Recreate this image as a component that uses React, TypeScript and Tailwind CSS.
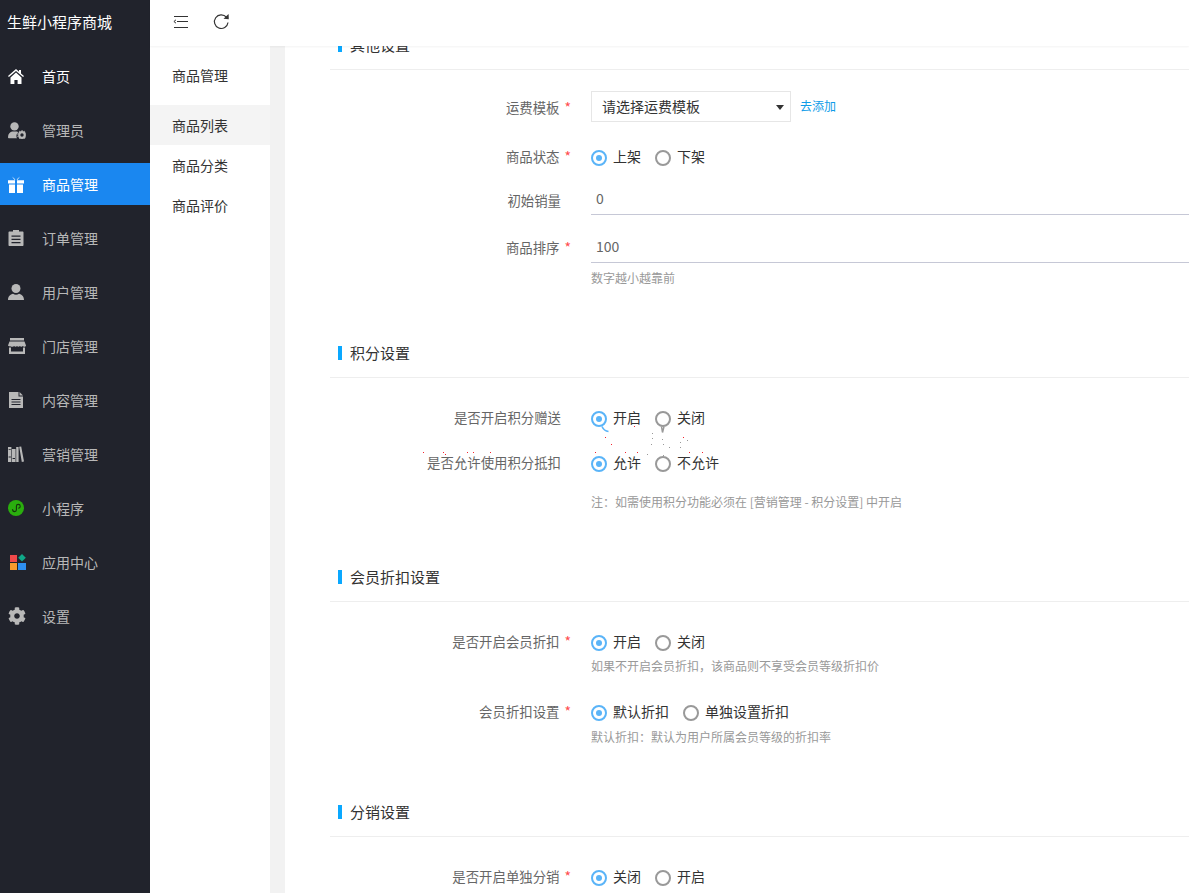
import React from 'react';
import { FaCog } from 'react-icons/fa';

type IconProps = { className?: string };

function HomeIcon({ className }: IconProps) {
  return (
    <svg viewBox="0 0 16 15" className={className} fill="currentColor">
      <path d="M8 0L0 7l.9 1L8 1.900 15.100 8l.9-1-3-2.600V1h-2v1.700z" />
      <path d="M2.500 8.400L8 3.600l5.500 4.800V15H9.600v-4H6.400v4H2.500z" />
    </svg>
  );
}

function UserCogIcon({ className }: IconProps) {
  return (
    <svg viewBox="0 0 18 17" className={className} fill="currentColor">
      <circle cx="6.500" cy="4.400" r="4.200" />
      <path d="M0 15.200c0-3.400 2.200-5.200 4.200-5.600h4.400c.7.1 1.200.3 1.700.6-1.300 1-1.900 2.300-1.900 3.700 0 .8.2 1.600.6 2.300H1.200C.5 16.200 0 15.900 0 15.200z" />
      <circle cx="14" cy="13" r="2.800" fill="none" stroke="currentColor" strokeWidth="2.200" />
      <circle cx="14" cy="13" r="4.400" fill="none" stroke="currentColor" strokeWidth="1" strokeDasharray="1.400 1.400" />
    </svg>
  );
}

function GiftIcon({ className }: IconProps) {
  return (
    <svg viewBox="0 0 16 17" className={className} fill="currentColor">
      <path d="M0 4.200h7v3.200H0zM9 4.200h7v3.200H9zM1 8.600h6V17H1zM9 8.600h6V17H9z" />
      <path d="M4 .4l3.400 3-1 .4zM12 .4L8.600 3.400l1 .4z" />
    </svg>
  );
}

function ClipboardIcon({ className }: IconProps) {
  return (
    <svg viewBox="0 0 16 16" className={className} fill="currentColor">
      <path fillRule="evenodd" d="M1.500 1.500H5V0h6v1.500h3.500c.6 0 1 .4 1 1v12.500c0 .6-.4 1-1 1h-13c-.6 0-1-.4-1-1V2.500c0-.6.4-1 1-1zM3.500 5.500v1.300h9V5.500zm0 3.300v1.300h9V8.800zm0 3.200v1.300h9V12z" />
    </svg>
  );
}

function UserIcon({ className }: IconProps) {
  return (
    <svg viewBox="0 0 16 16" className={className} fill="currentColor">
      <circle cx="8" cy="4.500" r="4.500" />
      <path d="M0 16c0-3.600 2.400-5.800 5-6.200.9.600 1.900.9 3 .9s2.100-.3 3-.9c2.600.4 5 2.600 5 6.200z" />
    </svg>
  );
}

function StoreIcon({ className }: IconProps) {
  return (
    <svg viewBox="0 0 18 16" className={className} fill="currentColor">
      <path d="M2 0h14v2.500H2zM1.500 3.500h15L18 7.500c0 .8-1 1.300-1.800 1.300-.6 0-1.100-.3-1.400-.7-.3.4-.9.7-1.500.7s-1.100-.3-1.400-.7c-.3.4-.9.7-1.500.7s-1.100-.3-1.400-.7c-.3.4-.9.7-1.500.7s-1.100-.3-1.400-.7c-.3.4-.9.7-1.500.7S0 8.300 0 7.500z" />
      <path d="M1 9.500h2V13.500h12V9.500h2V16H1z" />
    </svg>
  );
}

function FileIcon({ className }: IconProps) {
  return (
    <svg viewBox="0 0 14 16" className={className} fill="currentColor">
      <path fillRule="evenodd" d="M0 0h9.500v4.500H14V16H0zM2.500 7v1h9V7zm0 2.500v1h9v-1zm0 2.500v1h9v-1z" />
      <path d="M10.500 0L14 3.500h-3.500z" />
    </svg>
  );
}

function BooksIcon({ className }: IconProps) {
  return (
    <svg viewBox="0 0 16 16" className={className} fill="currentColor">
      <path d="M0 1h3.400v15H0zM4 3h3.600v13H4zM8.200 1h2.400v15H8.200zM11.200 .8l2-.4L16 15.600l-2.200.4z" />
      <path d="M.6 10.500h2.200v1H.6zM4.600 12h2.400v1H4.600zM.6 3h2.200v.8H.6z" fill="#22252e" />
    </svg>
  );
}

function MiniProgramIcon({ className }: IconProps) {
  return (
    <svg viewBox="0 0 16 16" className={className}>
      <circle cx="8" cy="8" r="8" fill="#2aae0e" />
      <path d="M4.600 9.600c0 1.200.9 2 1.900 2s1.900-.9 1.900-1.900V6.300c0-1 .9-1.900 1.900-1.900s1.900.8 1.900 1.900c0 1-.7 1.700-1.500 1.800" fill="none" stroke="#14330c" strokeWidth="1.100" strokeLinecap="round" />
    </svg>
  );
}

function AppsIcon({ className }: IconProps) {
  return (
    <svg viewBox="0 0 16 16" className={className}>
      <rect x="0" y="1" width="7" height="7" fill="#f0494a" />
      <rect x="0" y="9" width="7" height="7" fill="#f99a2e" />
      <rect x="8" y="9" width="8" height="7" fill="#2e8ff0" />
      <path d="M12 0l3.800 3.800L12 7.600 8.200 3.800z" fill="#0fa888" />
    </svg>
  );
}

function FoldIcon() {
  return (
    <svg viewBox="0 0 15 12" className="h-[12px] w-[15px]" fill="none" stroke="#333" strokeWidth="1">
      <path d="M1 .5h14M4 5.500h11M1 11.500h14" />
      <path d="M3 3.800L.9 5.500 3 7.200" />
    </svg>
  );
}

function RefreshIcon() {
  return (
    <svg viewBox="0 0 17 16" className="h-4 w-[17px]" fill="none">
      <path d="M13.400 3.200A6.800 6.800 0 1 0 15 8.500" stroke="#333" strokeWidth="1.200" />
      <path d="M10.500 4.800L15.800 5.200 15.600 0z" fill="#333" />
    </svg>
  );
}

// compression specks and radio smears that sit on the 积分设置 rows
const redSpecks = [[423, 452], [443, 452], [445, 454], [467, 452], [473, 452], [490, 452], [634, 426], [605, 437], [611, 444], [683, 437], [595, 452], [625, 452], [637, 452], [689, 452], [702, 452]];
const graySpecks = [[652, 433], [652, 438], [662, 439], [651, 444], [663, 444], [669, 447], [680, 447], [687, 440], [680, 442], [647, 454], [663, 455]];

function Specks() {
  return (
    <svg viewBox="0 0 1189 893" className="pointer-events-none absolute inset-0 h-[893px] w-[1189px]">
      <path d="M602 426.500Q604 431 608.500 431.500" fill="none" stroke="#5ab4f8" strokeWidth="1.600" />
      <path d="M661.500 426.500L662.500 432.500L664 426.500" fill="none" stroke="#999999" strokeWidth="1.500" />
      {redSpecks.map(([x, y]) => <rect key={`${x}-${y}`} x={x} y={y} width="1" height="1" fill="#f5222d" />)}
      {graySpecks.map(([x, y]) => <rect key={`${x}-${y}`} x={x} y={y} width="1" height="1" fill="#999999" />)}
    </svg>
  );
}

const menu = [
  { name: '首页', icon: <HomeIcon className="h-[15px] w-4" />, home: true },
  { name: '管理员', icon: <UserCogIcon className="h-[17px] w-[18px]" /> },
  { name: '商品管理', icon: <GiftIcon className="h-[17px] w-4" />, active: true },
  { name: '订单管理', icon: <ClipboardIcon className="h-4 w-4" /> },
  { name: '用户管理', icon: <UserIcon className="h-4 w-4" /> },
  { name: '门店管理', icon: <StoreIcon className="h-4 w-[18px]" /> },
  { name: '内容管理', icon: <FileIcon className="ml-px h-4 w-[14px]" /> },
  { name: '营销管理', icon: <BooksIcon className="h-4 w-4" /> },
  { name: '小程序', icon: <MiniProgramIcon className="h-4 w-4" /> },
  { name: '应用中心', icon: <AppsIcon className="ml-0.5 h-4 w-4" /> },
  { name: '设置', icon: <FaCog className="h-[18px] w-[18px]" /> },
];

function Radio({ label, checked }: { label: string; checked?: boolean }) {
  return (
    <span className="flex items-center">
      <span className={`relative top-[2px] flex h-4 w-4 items-center justify-center rounded-full border-2 ${checked ? 'border-[#5ab4f8]' : 'border-[#999999]'}`}>
        {checked && <span className="h-[6px] w-[6px] rounded-full bg-[#5ab4f8]" />}
      </span>
      <span className="ml-[6px] text-[14px] text-[#333]">{label}</span>
    </span>
  );
}

function Label({ text, required, className }: { text: string; required?: boolean; className?: string }) {
  return (
    <div className={`w-[261px] shrink-0 pr-[20px] text-right text-[13.4px] text-[#666] ${className ?? ''}`}>
      {text}
      {required ? <span className="ml-[5px] text-[14px] text-[#ff4d4f]">*</span> : <span className="ml-[10px]" />}
    </div>
  );
}

function Heading({ title }: { title: string }) {
  return (
    <div className="flex h-[37px] items-start border-b border-[#eeeeee] pl-2">
      <div className="mt-[5px] flex h-[14px] items-center">
        <span className="h-[14px] w-[4px] bg-[#0aa8ff]" />
        <span className="ml-[8px] text-[15px] leading-6 text-[#333]">{title}</span>
      </div>
    </div>
  );
}

function RadioRow({ text, required, options, className }: { text: string; required?: boolean; options: string[]; className?: string }) {
  return (
    <div className={`flex h-6 items-center ${className ?? ''}`}>
      <Label text={text} required={required} />
      <div className="flex items-center gap-[14px]">
        <Radio label={options[0]} checked />
        <Radio label={options[1]} />
      </div>
    </div>
  );
}

function Hint({ text, className }: { text: string; className?: string }) {
  return <div className={`pl-[261px] text-[12px] leading-5 text-[#999] ${className ?? ''}`}>{text}</div>;
}

function TextRow({ text, value, required, className, labelClass }: { text: string; value: string; required?: boolean; className?: string; labelClass?: string }) {
  return (
    <div className={`flex h-[30px] items-center ${className ?? ''}`}>
      <Label text={text} required={required} className={labelClass} />
      <div className="flex h-[30px] flex-1 items-center border-b border-[#c6c8d6] px-[5px] pb-[2px] text-[14px] text-[#666]">{value}</div>
    </div>
  );
}

export default function App() {
  return (
    <div className="relative flex h-[893px] w-[1189px] overflow-hidden bg-white font-['Noto_Sans_CJK_SC','Liberation_Sans',sans-serif]">
      {/* Sidebar */}
      <aside className="flex w-[150px] shrink-0 flex-col bg-[#21232c]">
        <div className="h-[55px] pl-[7px] pt-[11px] text-[15px] leading-[22px] text-white">生鲜小程序商城</div>
        {menu.map((m) => (
          <div key={m.name} className={`mb-3 flex h-[42px] items-center text-[14px] ${m.active ? 'bg-[#1a87f0] text-white' : m.home ? 'text-white' : 'text-[#b8b8b8]'}`}>
            <span className="flex w-[42px] items-center pl-2">{m.icon}</span>
            {m.name}
          </div>
        ))}
      </aside>

      <div className="flex min-w-0 flex-1 flex-col">
        {/* Top bar */}
        <header className="z-10 flex h-[46px] shrink-0 items-center gap-[25px] bg-white pb-[2px] pl-[23px] shadow-[0_1px_2px_rgba(0,0,0,0.05)]">
          <FoldIcon />
          <RefreshIcon />
        </header>

        <div className="flex min-h-0 flex-1">
          {/* Sub menu */}
          <nav className="w-[120px] shrink-0 bg-white text-[14px] text-[#333]">
            <div className="h-[59px] pl-[22px] pt-[18px] leading-[22px]">商品管理</div>
            <div className="flex h-10 items-center bg-[#f4f4f4] pl-[22px]">商品列表</div>
            <div className="flex h-10 items-center pl-[22px]">商品分类</div>
            <div className="flex h-10 items-center pl-[22px]">商品评价</div>
          </nav>
          <div className="w-[15px] shrink-0 bg-[#f2f2f2]" />

          {/* Form, scrolled so the first heading sits under the top bar */}
          <main className="min-w-0 flex-1 overflow-hidden pl-[45px]">
            <div className="-mt-[13px]">
              <Heading title="其他设置" />
              <div className="mt-[21px] flex items-center">
                <Label text="运费模板" required className="pt-[2px]" />
                <div className="flex h-[31px] w-[200px] items-center justify-between border border-[#e6e6e6] pl-[10px] pr-[6px] text-[14px] text-[#333]">
                  请选择运费模板
                  <span className="mt-[2px] h-0 w-0 border-x-[4px] border-t-[5px] border-x-transparent border-t-[#333]" />
                </div>
                <span className="-mt-[2px] ml-[9px] text-[12px] text-[#0e9be8]">去添加</span>
              </div>
              <RadioRow className="mt-[22px]" text="商品状态" required options={['上架', '下架']} />
              <TextRow className="mt-[17px]" text="初始销量" value="0" />
              <TextRow className="mt-[18px]" text="商品排序" value="100" required labelClass="pb-[2px]" />
              <Hint className="mt-[5px]" text="数字越小越靠前" />
            </div>

            <div className="mt-[53px]">
              <Heading title="积分设置" />
              <RadioRow className="mt-[27px]" text="是否开启积分赠送" options={['开启', '关闭']} />
              <RadioRow className="mt-[21px]" text="是否允许使用积分抵扣" options={['允许', '不允许']} />
              <Hint className="mt-[18px]" text="注：如需使用积分功能必须在 [营销管理 - 积分设置] 中开启" />
            </div>

            <div className="mt-[53px]">
              <Heading title="会员折扣设置" />
              <RadioRow className="mt-[27px]" text="是否开启会员折扣" required options={['开启', '关闭']} />
              <Hint className="mt-[3px]" text="如果不开启会员折扣，该商品则不享受会员等级折扣价" />
              <RadioRow className="mt-[23px]" text="会员折扣设置" required options={['默认折扣', '单独设置折扣']} />
              <Hint className="mt-[4px]" text="默认折扣：默认为用户所属会员等级的折扣率" />
            </div>

            <div className="mt-[53px]">
              <Heading title="分销设置" />
              <RadioRow className="mt-[27px]" text="是否开启单独分销" required options={['关闭', '开启']} />
            </div>
          </main>
        </div>
      </div>
      <Specks />
    </div>
  );
}
